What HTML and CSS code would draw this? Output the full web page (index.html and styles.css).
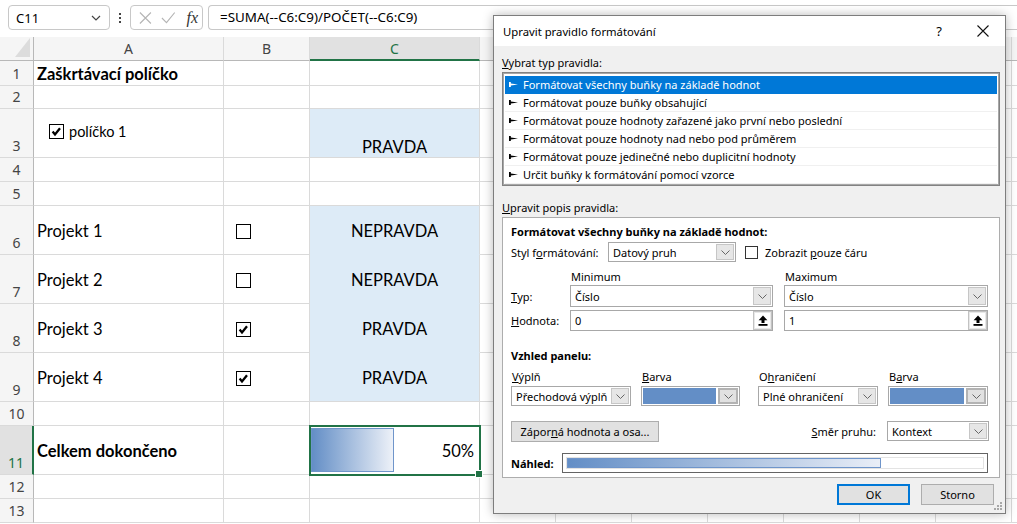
FILE: index.html
```html
<!DOCTYPE html>
<html lang="cs">
<head>
<meta charset="utf-8">
<title>Excel – Upravit pravidlo formátování</title>
<link rel="stylesheet" href="styles.css">
</head>
<body>
<div class="app">
  <div class="fbar">
    <div class="namebox"><span>C11</span>
      <svg class="chev" width="10" height="6" viewBox="0 0 10 6"><path d="M1 1l4 4 4-4" fill="none" stroke="#444" stroke-width="1.2"/></svg>
    </div>
    <div class="vdots"><i></i><i></i><i></i></div>
    <div class="fnbox">
      <svg width="14" height="14" viewBox="0 0 14 14"><path d="M1 1l12 12M13 1L1 13" stroke="#b4b4b4" stroke-width="1.2" fill="none"/></svg>
      <svg width="16" height="14" viewBox="0 0 16 14"><path d="M1 7l5 5L15 1" stroke="#b4b4b4" stroke-width="1.2" fill="none"/></svg>
      <span class="fx">fx</span>
    </div>
    <div class="formula">=SUMA(--C6:C9)/POČET(--C6:C9)</div>
  </div>

  <div class="sheet">
    <!-- header -->
    <div class="corner"><span class="tri"></span></div>
    <div class="ch">A</div>
    <div class="ch">B</div>
    <div class="ch sel">C</div>
    <div class="ch rest"></div>
    <!-- 1 -->
    <div class="rh">1</div>
    <div class="c a bold">Zaškrtávací políčko</div>
    <div class="c"></div>
    <div class="c"></div>
    <div class="c rest"></div>
    <!-- 2 -->
    <div class="rh">2</div>
    <div class="c"></div><div class="c"></div><div class="c"></div><div class="c rest"></div>
    <!-- 3 -->
    <div class="rh">3</div>
    <div class="c a ctl"><svg class="cb" width="15" height="15" viewBox="0 0 15 15"><rect x=".5" y=".5" width="14" height="14" fill="#fff" stroke="#000"/><path d="M3.6 7.6l2.4 2.9 5-6.2" stroke="#000" stroke-width="2.3" fill="none"/></svg><span class="ctltext">políčko 1</span></div>
    <div class="c"></div>
    <div class="c val fill bottom">PRAVDA</div>
    <div class="c rest"></div>
    <!-- 4 -->
    <div class="rh">4</div>
    <div class="c"></div><div class="c"></div><div class="c"></div><div class="c rest"></div>
    <!-- 5 -->
    <div class="rh">5</div>
    <div class="c"></div><div class="c"></div><div class="c"></div><div class="c rest"></div>
    <!-- 6 -->
    <div class="rh">6</div>
    <div class="c a">Projekt 1</div>
    <div class="c b"><svg class="cb" width="15" height="15" viewBox="0 0 15 15"><rect x=".5" y=".5" width="14" height="14" fill="#fff" stroke="#000"/></svg></div>
    <div class="c val fill">NEPRAVDA</div>
    <div class="c rest"></div>
    <!-- 7 -->
    <div class="rh">7</div>
    <div class="c a">Projekt 2</div>
    <div class="c b"><svg class="cb" width="15" height="15" viewBox="0 0 15 15"><rect x=".5" y=".5" width="14" height="14" fill="#fff" stroke="#000"/></svg></div>
    <div class="c val fill">NEPRAVDA</div>
    <div class="c rest"></div>
    <!-- 8 -->
    <div class="rh">8</div>
    <div class="c a">Projekt 3</div>
    <div class="c b"><svg class="cb" width="15" height="15" viewBox="0 0 15 15"><rect x=".5" y=".5" width="14" height="14" fill="#fff" stroke="#000"/><path d="M3.6 7.6l2.4 2.9 5-6.2" stroke="#000" stroke-width="2.3" fill="none"/></svg></div>
    <div class="c val fill">PRAVDA</div>
    <div class="c rest"></div>
    <!-- 9 -->
    <div class="rh">9</div>
    <div class="c a">Projekt 4</div>
    <div class="c b"><svg class="cb" width="15" height="15" viewBox="0 0 15 15"><rect x=".5" y=".5" width="14" height="14" fill="#fff" stroke="#000"/><path d="M3.6 7.6l2.4 2.9 5-6.2" stroke="#000" stroke-width="2.3" fill="none"/></svg></div>
    <div class="c val fill last">PRAVDA</div>
    <div class="c rest"></div>
    <!-- 10 -->
    <div class="rh">10</div>
    <div class="c"></div><div class="c"></div><div class="c"></div><div class="c rest"></div>
    <!-- 11 -->
    <div class="rh selrow">11</div>
    <div class="c a bold">Celkem dokončeno</div>
    <div class="c"></div>
    <div class="c active"><span class="databar" style="width:49%"></span><span class="pct">50%</span></div>
    <div class="c rest"></div>
    <!-- 12 -->
    <div class="rh">12</div>
    <div class="c"></div><div class="c"></div><div class="c"></div><div class="c rest"></div>
    <!-- 13 -->
    <div class="rh">13</div>
    <div class="c"></div><div class="c"></div><div class="c"></div><div class="c rest"></div>
  </div>

  <div class="dialog">
    <div class="titlebar">
      <span class="title">Upravit pravidlo formátování</span>
      <span class="help">?</span>
      <svg class="close" width="12" height="12" viewBox="0 0 12 12"><path d="M.5 .5l11 11M11.5 .5l-11 11" stroke="#111" stroke-width="1.1" fill="none"/></svg>
    </div>
    <div class="dbody">
      <div class="lbl"><u>V</u>ybrat typ pravidla:</div>
      <ul class="rulelist">
        <li class="on"><svg class="ri" width="9" height="7" viewBox="0 0 9 7"><path d="M0 1h1.8v5H0zM1.8 2.5L9 3.5 1.8 4.5z" fill="currentColor"/></svg>Formátovat všechny buňky na základě hodnot</li>
        <li><svg class="ri" width="9" height="7" viewBox="0 0 9 7"><path d="M0 1h1.8v5H0zM1.8 2.5L9 3.5 1.8 4.5z" fill="currentColor"/></svg>Formátovat pouze buňky obsahující</li>
        <li><svg class="ri" width="9" height="7" viewBox="0 0 9 7"><path d="M0 1h1.8v5H0zM1.8 2.5L9 3.5 1.8 4.5z" fill="currentColor"/></svg>Formátovat pouze hodnoty zařazené jako první nebo poslední</li>
        <li><svg class="ri" width="9" height="7" viewBox="0 0 9 7"><path d="M0 1h1.8v5H0zM1.8 2.5L9 3.5 1.8 4.5z" fill="currentColor"/></svg>Formátovat pouze hodnoty nad nebo pod průměrem</li>
        <li><svg class="ri" width="9" height="7" viewBox="0 0 9 7"><path d="M0 1h1.8v5H0zM1.8 2.5L9 3.5 1.8 4.5z" fill="currentColor"/></svg>Formátovat pouze jedinečné nebo duplicitní hodnoty</li>
        <li><svg class="ri" width="9" height="7" viewBox="0 0 9 7"><path d="M0 1h1.8v5H0zM1.8 2.5L9 3.5 1.8 4.5z" fill="currentColor"/></svg>Určit buňky k formátování pomocí vzorce</li>
      </ul>
      <div class="lbl lbl2"><u>U</u>pravit popis pravidla:</div>
      <div class="panel">
        <div class="phead">Formátovat všechny buňky na základě hodnot:</div>
        <div class="stylrow">
          <span class="slabel">Styl f<u>o</u>rmátování:</span>
          <div class="dd w128"><span class="ddt">Datový pruh</span><span class="arr"><svg width="9" height="5" viewBox="0 0 9 5"><path d="M.5 .5l4 4 4-4" fill="none" stroke="#666"/></svg></span></div>
          <span class="chk"></span>
          <span>Zobrazit <u>p</u>ouze čáru</span>
        </div>
        <div class="minmax">
          <span></span><span class="collbl">Minimum</span><span class="collbl">Maximum</span>
          <span class="rowlbl"><u>T</u>yp:</span>
          <div class="dd tall"><span class="ddt">Číslo</span><span class="arr"><svg width="9" height="5" viewBox="0 0 9 5"><path d="M.5 .5l4 4 4-4" fill="none" stroke="#666"/></svg></span></div>
          <div class="dd tall"><span class="ddt">Číslo</span><span class="arr"><svg width="9" height="5" viewBox="0 0 9 5"><path d="M.5 .5l4 4 4-4" fill="none" stroke="#666"/></svg></span></div>
          <span class="rowlbl hod"><u>H</u>odnota:</span>
          <div class="inp"><span class="ddt">0</span><span class="pick"><svg width="10" height="11" viewBox="0 0 10 11"><path d="M5 .5L.6 5.2h2.9v2.8h3V5.2h2.9z" fill="#000"/><rect x=".5" y="9" width="9" height="1.8" fill="#000"/></svg></span></div>
          <div class="inp"><span class="ddt">1</span><span class="pick"><svg width="10" height="11" viewBox="0 0 10 11"><path d="M5 .5L.6 5.2h2.9v2.8h3V5.2h2.9z" fill="#000"/><rect x=".5" y="9" width="9" height="1.8" fill="#000"/></svg></span></div>
        </div>
        <div class="phead vh">Vzhled panelu:</div>
        <div class="appear">
          <div class="grp w120"><span class="glbl"><u>V</u>ýplň</span>
            <div class="dd"><span class="ddt">Přechodová výplň</span><span class="arr"><svg width="9" height="5" viewBox="0 0 9 5"><path d="M.5 .5l4 4 4-4" fill="none" stroke="#666"/></svg></span></div></div>
          <div class="grp w99 g10"><span class="glbl"><u>B</u>arva</span>
            <div class="dd color"><span class="sw"></span><span class="arr dark"><svg width="9" height="5" viewBox="0 0 9 5"><path d="M.5 .5l4 4 4-4" fill="none" stroke="#666"/></svg></span></div></div>
          <div class="grp w120 g18"><span class="glbl">O<u>h</u>raničení</span>
            <div class="dd"><span class="ddt">Plné ohraničení</span><span class="arr"><svg width="9" height="5" viewBox="0 0 9 5"><path d="M.5 .5l4 4 4-4" fill="none" stroke="#666"/></svg></span></div></div>
          <div class="grp w100 g10"><span class="glbl">B<u>a</u>rva</span>
            <div class="dd color"><span class="sw"></span><span class="arr dark"><svg width="9" height="5" viewBox="0 0 9 5"><path d="M.5 .5l4 4 4-4" fill="none" stroke="#666"/></svg></span></div></div>
        </div>
        <div class="negrow">
          <button class="btn neg">Zápor<u>n</u>á hodnota a osa...</button>
          <span class="smer"><u>S</u>měr pruhu:</span>
          <div class="dd w102"><span class="ddt">Kontext</span><span class="arr"><svg width="9" height="5" viewBox="0 0 9 5"><path d="M.5 .5l4 4 4-4" fill="none" stroke="#666"/></svg></span></div>
        </div>
        <div class="prevrow">
          <span class="plbl">Náhled:</span>
          <div class="prev"><div class="previn"><span class="pbar"></span></div></div>
        </div>
      </div>
      <div class="btns">
        <button class="btn ok">OK</button>
        <button class="btn">Storno</button>
      </div>
    </div>
    <svg class="grip" width="8" height="8" viewBox="0 0 8 8"><g fill="#a8a8a8"><rect x="6" y="0" width="2" height="2"/><rect x="3" y="3" width="2" height="2"/><rect x="6" y="3" width="2" height="2"/><rect x="0" y="6" width="2" height="2"/><rect x="3" y="6" width="2" height="2"/><rect x="6" y="6" width="2" height="2"/></g></svg>
  </div>
</div>
</body>
</html>
```

FILE: styles.css
```css
* { box-sizing: border-box; margin: 0; padding: 0; }
body { margin: 0; width: 1017px; height: 524px; overflow: hidden; background: #fff; font-family: "Noto Sans", sans-serif; color: #000; }
.app { position: relative; width: 1017px; height: 524px; overflow: hidden; }

/* formula bar */
.fbar { height: 37px; display: flex; align-items: flex-start; padding: 5px 0 0 8px; background: #fff; }
.namebox { width: 102px; height: 25px; border: 1px solid #c8c8c8; border-radius: 4px; display: flex; align-items: center; justify-content: space-between; padding: 0 8px 0 7px; font-size: 13px; }
.vdots { width: 20px; height: 25px; display: flex; flex-direction: column; align-items: center; justify-content: center; gap: 2px; }
.vdots i { display: block; width: 2px; height: 2px; background: #444; }
.fnbox { width: 73px; height: 25px; border: 1px solid #c8c8c8; border-radius: 4px; display: flex; align-items: center; padding: 0 4px 0 8px; gap: 9px; }
.fx { font-family: "Liberation Serif", serif; font-style: italic; font-size: 16px; color: #333; margin-left: 2px; }
.formula { flex: 1; height: 25px; margin-left: 5px; border: 1px solid #c8c8c8; border-right: none; border-radius: 4px 0 0 4px; padding-left: 11px; font-size: 13.4px; line-height: 23px; }

/* sheet */
.sheet { display: grid; grid-template-columns: 34px 190px 86px 170px 1fr; grid-template-rows: 24px 25px 23px 49px 24px 24px 49px 49px 49px 49px 24px 49px 24px 24px; font-family: Lato, sans-serif; font-size: 16.5px; }
.corner { background: #f5f5f5; border-right: 1px solid #b8b8b8; border-bottom: 1px solid #b8b8b8; position: relative; }
.tri { position: absolute; right: 3px; bottom: 3px; width: 15px; height: 19px; background: #dcdcdc; clip-path: polygon(100% 0, 100% 100%, 0 100%); }
.ch { background: #f5f5f5; border-right: 1px solid #dadada; border-bottom: 1px solid #b8b8b8; display: flex; align-items: center; justify-content: center; font-family: "Noto Sans", sans-serif; font-size: 14px; color: #444; }
.ch.sel { background: #e1e1e1; color: #217346; border-bottom: 2px solid #217346; }
.ch.rest { background-color: #f5f5f5; }
.rh { background: #f5f5f5; border-right: 1px solid #b8b8b8; border-bottom: 1px solid #dadada; display: flex; align-items: flex-end; justify-content: center; font-family: "Noto Sans", sans-serif; font-size: 14px; color: #444; line-height: 20px; padding-bottom: 1px; }
.rh.selrow { background: #e1e1e1; color: #217346; border-right: 2px solid #217346; }
.c { border-right: 1px solid #dadada; border-bottom: 1px solid #dadada; display: flex; align-items: center; position: relative; }
.rest { background-image: repeating-linear-gradient(to right, transparent 0 75px, #dadada 75px 76px); border-right: none; }
.a { padding-left: 3px; padding-top: 2px; white-space: nowrap; }
.bold { font-weight: 700; }
.b { padding-left: 12px; padding-top: 3px; }
.ctl { align-items: flex-start; padding: 15px 0 0 15px; }
.ctltext { font-size: 14.5px; margin-left: 5px; line-height: 15px; }
.val { justify-content: center; padding-top: 2px; }
.fill { background: #ddebf7; border-bottom-color: #ddebf7; }
.fill.last, .fill.bottom { border-bottom-color: #dadada; }
.bottom { align-items: flex-end; padding-bottom: 0; }
.active { outline: 2px solid #217346; outline-offset: -1px; z-index: 2; justify-content: flex-end; padding-right: 5px; padding-top: 2px; }
.active::after { content: ""; position: absolute; right: -4px; bottom: -4px; width: 6px; height: 6px; background: #217346; border: 1px solid #fff; }
.databar { position: absolute; left: 1px; top: 2px; bottom: 2px; background: linear-gradient(to right, #638ec6, #edf1f8); border: 1px solid #6f95ca; }
.pct { position: relative; }

/* dialog */
.dialog { position: absolute; left: 493px; top: 15px; width: 513px; height: 499px; background: #f0f0f0; border: 1px solid #7d7d7d; box-shadow: 0 0 10px rgba(0,0,0,.28); font-family: "Noto Sans", sans-serif; font-size: 11px; display: flex; flex-direction: column; z-index: 10; }
.titlebar { height: 30px; background: #fff; display: flex; align-items: center; padding-left: 9px; }
.title { font-size: 11.3px; flex: 1; }
.help { font-size: 13px; margin-right: 35px; }
.close { margin-right: 16px; }
.dbody { padding: 9px 5px 0 8px; display: flex; flex-direction: column; flex: 1; position: relative; }
.lbl { line-height: 16px; height: 16px; }
.lbl2 { margin-top: 14px; }
.rulelist { list-style: none; margin-top: 1px; height: 114px; background: #fff; border: 1px solid #828282; box-shadow: inset 0 0 0 1px #a7a7a7; padding: 3px 2px; }
.rulelist li { height: 18px; line-height: 17px; border-bottom: 1px solid #f0f0f0; display: flex; align-items: center; padding-left: 4px; white-space: nowrap; }
.rulelist li.on { background: #0078d7; color: #fff; border-bottom-color: #0078d7; }
.ri { margin-right: 5px; flex: none; }
.panel { margin-top: 1px; background: #fff; border: 1px solid #adadad; padding: 6px 10px 4px 8px; display: flex; flex-direction: column; }
.phead { font-weight: 700; line-height: 16px; height: 16px; }
.phead.vh { margin-top: 17px; }
.stylrow { margin-top: 2px; height: 20px; display: flex; align-items: center; }
.slabel { width: 97px; }
.dd { height: 20px; border: 1px solid #a8a8a8; background: #fff; display: flex; align-items: stretch; }
.dd.tall { height: 22px; }
.w128 { width: 128px; }
.w102 { width: 102px; }
.ddt { flex: 1; padding-left: 4px; display: flex; align-items: center; white-space: nowrap; overflow: hidden; }
.arr { width: 18px; margin: 1px; background: #e6e6e6; border: 1px solid #c6c6c6; display: flex; align-items: center; justify-content: center; }
.arr.dark { margin: 0; width: 20px; border: 2px solid #b3b3b3; background: #e1e1e1; }
.chk { width: 13px; height: 13px; border: 1px solid #333; background: #fff; margin: 0 7px 0 9px; }
.minmax { display: grid; grid-template-columns: 48px 203px 204px; column-gap: 11px; grid-template-rows: 16px 22px 24px; margin-top: 7px; }
.minmax .inp { margin-top: 3px; }
.collbl { padding-left: 1px; line-height: 16px; }
.rowlbl { display: flex; align-items: center; white-space: nowrap; }
.rowlbl.hod { padding-top: 3px; }
.inp { height: 21px; border: 1px solid #a8a8a8; background: #fff; display: flex; }
.pick { width: 19px; background: #fff; border: 1px solid #c2c2c2; box-shadow: inset 0 0 0 1px #e8e8e8; display: flex; align-items: center; justify-content: center; }
.appear { display: flex; margin-top: 5px; }
.grp { display: flex; flex-direction: column; }
.glbl { line-height: 16px; padding-left: 1px; margin-bottom: 1px; }
.w120 { width: 120px; }
.w99 { width: 99px; }
.w100 { width: 100px; }
.g10 { margin-left: 10px; }
.g18 { margin-left: 18px; }
.color { padding: 1px; }
.sw { flex: 1; background: #638ec6; margin-right: 2px; }
.negrow { display: flex; align-items: center; margin-top: 14px; height: 22px; }
.btn { font-family: "Noto Sans", sans-serif; font-size: 11px; background: #e1e1e1; border: 1px solid #adadad; color: #000; height: 21px; }
.neg { width: 148px; }
.smer { margin-left: auto; margin-right: 11px; }
.prevrow { display: flex; align-items: center; margin-top: 11px; }
.plbl { width: 51px; font-weight: 700; }
.prev { width: 426px; height: 20px; border: 1px solid #646464; padding: 3px; background: #fff; }
.previn { height: 12px; border: 1px solid #e3e3e3; position: relative; }
.pbar { position: absolute; left: 0; top: 0; bottom: 0; width: 314px; background: linear-gradient(to right, #638ec6, #e9eef7); border: 1px solid #6f95ca; }
.btns { display: flex; justify-content: flex-end; gap: 11px; margin-top: 6px; padding-right: 6px; }
.btns .btn { width: 73px; }
.ok { border: 2px solid #0078d7; }
.grip { position: absolute; right: 3px; bottom: 3px; }
```
